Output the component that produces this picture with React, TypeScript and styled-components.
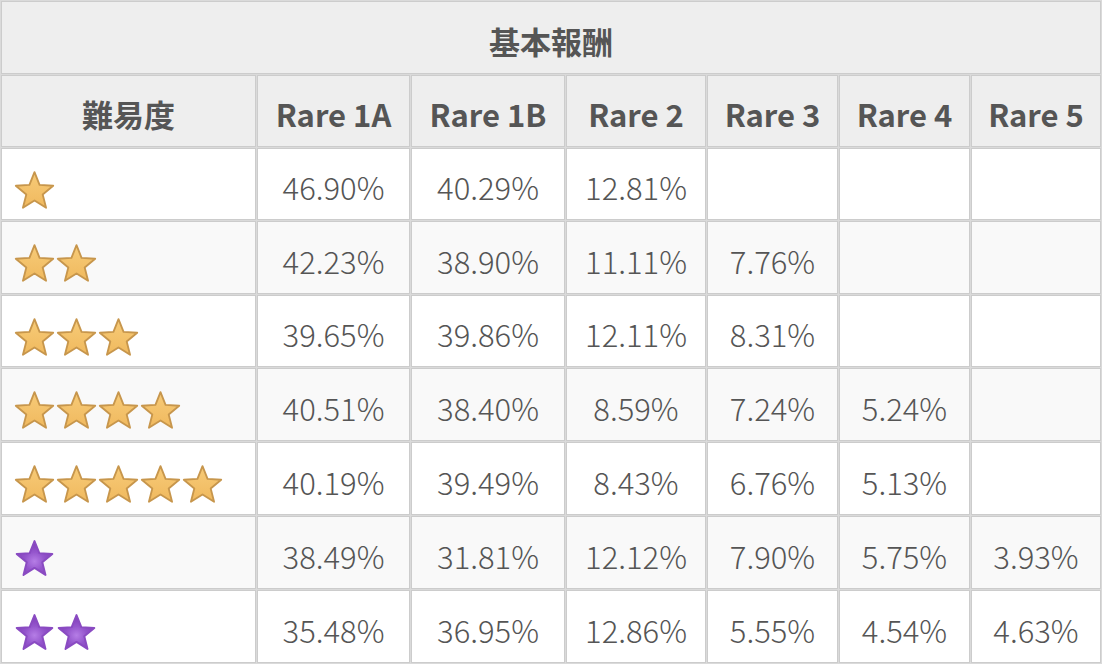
import React from "react";
import styled, { createGlobalStyle } from "styled-components";

const Global = createGlobalStyle`
  html, body { margin: 0; padding: 0; background: #ffffff; }
  body { font-family: "Noto Sans CJK JP", "Noto Sans", sans-serif; }
`;

const Table = styled.table`
  width: 1102px;
  table-layout: fixed;
  border-collapse: separate;
  border-spacing: 1px;
  background: #dadada;
  color: #555555;
  font-size: 31px;
`;

const Row = styled.tr<{ $h: number; $alt?: boolean }>`
  height: ${(p) => p.$h}px;
  background: ${(p) => (p.$alt ? "#f9f9f9" : "#ffffff")};
`;

const HeadCell = styled.th`
  box-sizing: border-box;
  border: 1px solid #cccccc;
  background: #eeeeee;
  font-weight: 700;
  text-align: center;
  vertical-align: middle;
  padding: 5px 0 0;
  white-space: nowrap;
`;

const Cell = styled.td`
  box-sizing: border-box;
  border: 1px solid #cccccc;
  text-align: center;
  vertical-align: middle;
  padding: 5px 0 0;
  font-weight: 300;
  white-space: nowrap;
`;

const StarCell = styled.td`
  box-sizing: border-box;
  border: 1px solid #cccccc;
  vertical-align: middle;
  padding: 11px 0 0 12px;
`;

const Stars = styled.div`
  display: flex;
  gap: 1px;
  align-items: center;
`;

const StarBox = styled.span`
  display: inline-flex;
  width: 41px;
  height: 40px;
  justify-content: center;
  align-items: center;
`;

const STAR =
  "50,4 62.34,35.01 95.65,37.17 69.97,58.49 78.21,90.83 50,73 21.79,90.83 30.03,58.49 4.35,37.17 37.66,35.01";

const GoldStar = () => (
  <StarBox>
    <svg width="42" height="40" viewBox="0 0 100 95">
      <defs>
        <linearGradient id="gold" x1="0" y1="0" x2="0" y2="1">
          <stop offset="0" stopColor="#f7cb78" />
          <stop offset="1" stopColor="#f0b95e" />
        </linearGradient>
      </defs>
      <polygon
        points={STAR}
        fill="url(#gold)"
        stroke="#c7964c"
        strokeWidth="4.5"
        strokeLinejoin="round"
      />
    </svg>
  </StarBox>
);

const PurpleStar = () => (
  <StarBox>
    <svg width="39" height="38" viewBox="0 0 100 95">
      <defs>
        <radialGradient id="purp" cx="0.5" cy="0.6" r="0.5">
          <stop offset="0" stopColor="#b57de6" />
          <stop offset="0.55" stopColor="#9455cc" />
          <stop offset="1" stopColor="#8543bd" />
        </radialGradient>
        <filter id="soft" x="-10%" y="-10%" width="120%" height="120%">
          <feGaussianBlur stdDeviation="1.4" />
        </filter>
      </defs>
      <polygon
        points={STAR}
        fill="url(#purp)"
        stroke="#8a4bc2"
        strokeWidth="5"
        strokeLinejoin="round"
        filter="url(#soft)"
      />
    </svg>
  </StarBox>
);

type Data = { gold: boolean; n: number; vals: string[]; h: number };

const rows: Data[] = [
  { gold: true, n: 1, vals: ["46.90%", "40.29%", "12.81%", "", "", ""], h: 72 },
  { gold: true, n: 2, vals: ["42.23%", "38.90%", "11.11%", "7.76%", "", ""], h: 73 },
  { gold: true, n: 3, vals: ["39.65%", "39.86%", "12.11%", "8.31%", "", ""], h: 72 },
  { gold: true, n: 4, vals: ["40.51%", "38.40%", "8.59%", "7.24%", "5.24%", ""], h: 73 },
  { gold: true, n: 5, vals: ["40.19%", "39.49%", "8.43%", "6.76%", "5.13%", ""], h: 73 },
  { gold: false, n: 1, vals: ["38.49%", "31.81%", "12.12%", "7.90%", "5.75%", "3.93%"], h: 73 },
  { gold: false, n: 2, vals: ["35.48%", "36.95%", "12.86%", "5.55%", "4.54%", "4.63%"], h: 73 },
];

const widths = [255, 153, 154, 140, 131, 131, 130];
const heads = ["難易度", "Rare 1A", "Rare 1B", "Rare 2", "Rare 3", "Rare 4", "Rare 5"];

export default function App() {
  return (
    <>
      <Global />
      <Table>
        <colgroup>
          {widths.map((w, i) => (
            <col key={i} style={{ width: w }} />
          ))}
        </colgroup>
        <thead>
          <Row $h={73}>
            <HeadCell colSpan={7}>基本報酬</HeadCell>
          </Row>
          <Row $h={72}>
            {heads.map((h) => (
              <HeadCell key={h}>{h}</HeadCell>
            ))}
          </Row>
        </thead>
        <tbody>
          {rows.map((r, i) => (
            <Row key={i} $h={r.h} $alt={i % 2 === 1}>
              <StarCell>
                <Stars>
                  {Array.from({ length: r.n }).map((_, k) =>
                    r.gold ? <GoldStar key={k} /> : <PurpleStar key={k} />
                  )}
                </Stars>
              </StarCell>
              {r.vals.map((v, k) => (
                <Cell key={k}>{v}</Cell>
              ))}
            </Row>
          ))}
        </tbody>
      </Table>
    </>
  );
}
